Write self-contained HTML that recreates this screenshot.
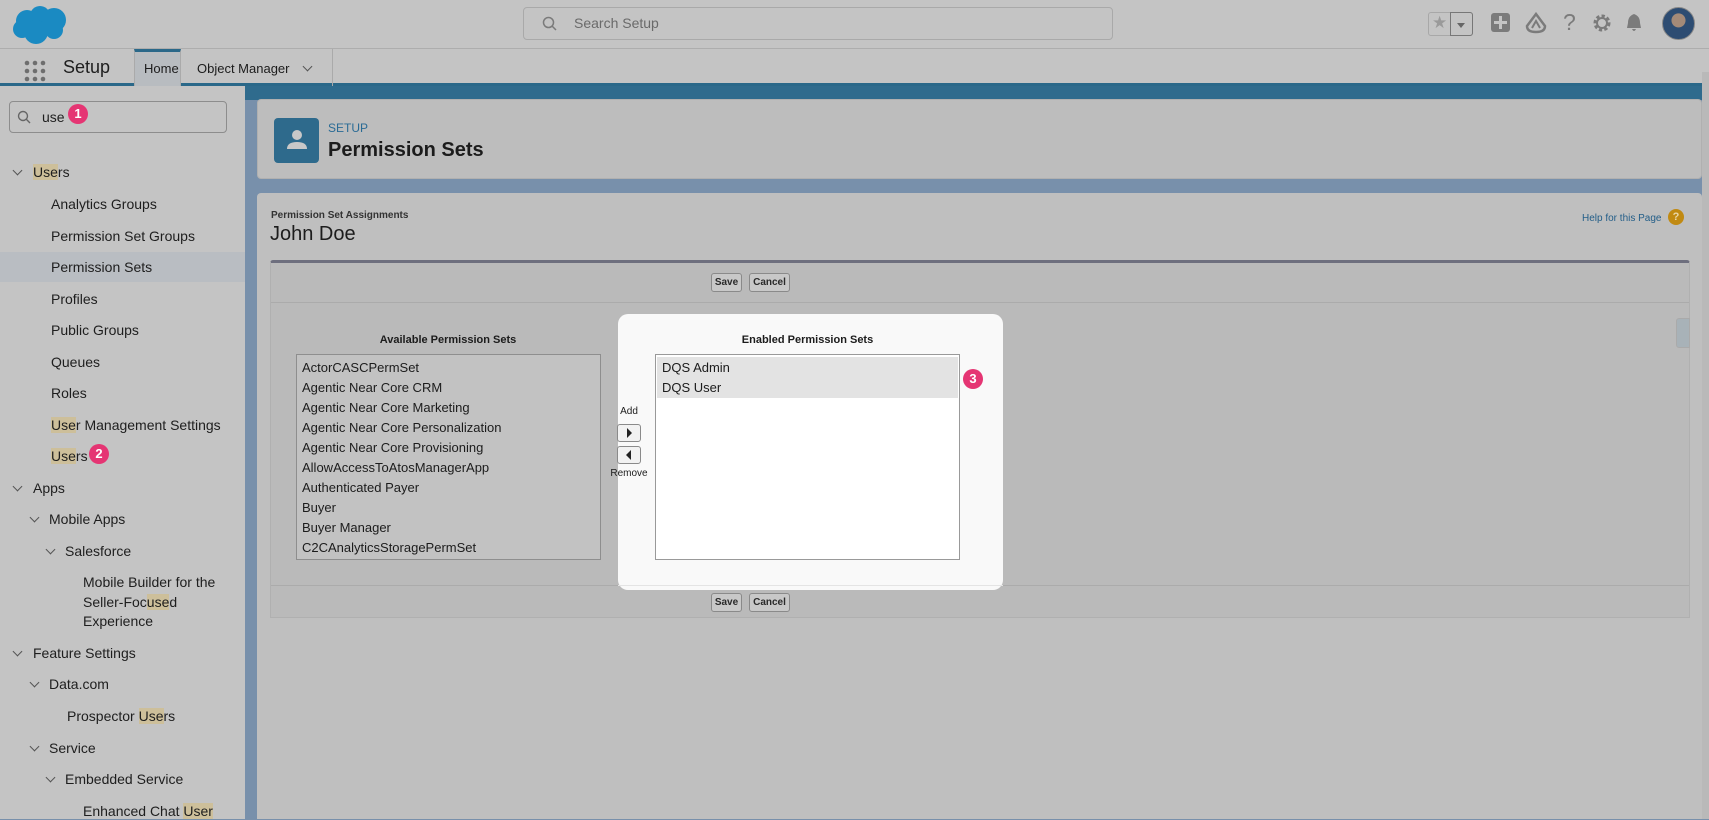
<!DOCTYPE html>
<html><head><meta charset="utf-8">
<style>
*{margin:0;padding:0;box-sizing:border-box}
body{width:1709px;height:819px;overflow:hidden;position:relative;background:#7890ab;font-family:"Liberation Sans",Arial,sans-serif;color:#1c1c1c}
.a{position:absolute}
.top{left:0;top:0;width:1709px;height:49px;background:#c4c4c4;border-bottom:1px solid #adadad}
.nav{left:0;top:49px;width:1709px;height:37px;background:#c4c4c4;border-bottom:3px solid #2a6889}
.band{left:245px;top:86px;width:1464px;height:14px;background:#2f6b8d}
.side{left:0;top:86px;width:245px;height:733px;background:#c4c4c4}
.si{position:absolute;font-size:14px;white-space:nowrap;line-height:18px;color:#1e1e1e}
.chev{position:absolute;width:7px;height:7px;border-right:1.3px solid #555;border-bottom:1.3px solid #555;transform:rotate(45deg)}
.hl{background:#cdbf9a}
.badge{position:absolute;width:20px;height:20px;border-radius:50%;background:#e53573;color:#fff;font-size:13px;font-weight:bold;text-align:center;line-height:20px}
.btn{position:absolute;height:19px;border:1px solid #8a8a8a;border-radius:3px;background:#c8c8c8;font-size:10px;font-weight:bold;line-height:17px;text-align:center;color:#2a2a2a}
.li{font-size:13px;line-height:20px;padding-left:5px;white-space:nowrap}
</style></head><body>
<div class="a top"></div>
<svg class="a" style="left:10px;top:3px" width="60" height="42" viewBox="0 0 60 42"><g fill="#1a8ac2"><circle cx="17" cy="18" r="11"/><circle cx="30" cy="13" r="10"/><circle cx="44" cy="17" r="12"/><circle cx="26" cy="29" r="12"/><circle cx="12" cy="26" r="9"/><circle cx="44" cy="27" r="9"/></g></svg>
<div class="a" style="left:523px;top:7px;width:590px;height:33px;border:1px solid #a9a9a9;border-radius:4px;background:#c4c4c4"></div>
<svg class="a" style="left:542px;top:16px" width="16" height="16"><circle cx="6.5" cy="6.5" r="5" fill="none" stroke="#7a7a7a" stroke-width="1.5"/><line x1="10" y1="10" x2="14" y2="14" stroke="#7a7a7a" stroke-width="1.5"/></svg>
<div class="a" style="left:574px;top:15px;font-size:14px;color:#6a6a6a">Search Setup</div>
<div class="a" style="left:1428px;top:12px;width:45px;height:24px;border:1px solid #a8a8a8;border-radius:3px"></div>
<div class="a" style="left:1450px;top:12px;width:23px;height:24px;border:1px solid #777;border-radius:0 3px 3px 0"></div>
<div class="a" style="left:1432px;top:13px;font-size:17px;color:#9a9a9a">★</div>
<div class="a" style="left:1457px;top:23px;border-left:4px solid transparent;border-right:4px solid transparent;border-top:5px solid #666"></div>
<div class="a" style="left:1491px;top:13px;width:19px;height:19px;background:#7b7b7b;border-radius:3px"></div>
<div class="a" style="left:1499px;top:16px;width:3px;height:13px;background:#c4c4c4"></div>
<div class="a" style="left:1494px;top:21px;width:13px;height:3px;background:#c4c4c4"></div>
<svg class="a" style="left:1525px;top:12px" width="22" height="22"><path d="M11 2 L20 14 Q20 20 11 20 Q2 20 2 14 Z" fill="none" stroke="#7b7b7b" stroke-width="2.5"/><path d="M7 16 L11 9 L15 16" fill="none" stroke="#7b7b7b" stroke-width="2"/></svg>
<div class="a" style="left:1563px;top:9px;font-size:23px;color:#7b7b7b">?</div>
<svg class="a" style="left:1592px;top:13px" width="20" height="20"><circle cx="10" cy="10" r="6.5" fill="none" stroke="#7b7b7b" stroke-width="4" stroke-dasharray="3 2"/><circle cx="10" cy="10" r="5" fill="none" stroke="#7b7b7b" stroke-width="2"/></svg>
<svg class="a" style="left:1624px;top:13px" width="20" height="20"><path d="M10 1 Q4 3 4 10 L3 15 L17 15 L16 10 Q16 3 10 1Z M8 16 Q10 20 12 16Z" fill="#7b7b7b"/></svg>
<div class="a" style="left:1662px;top:7px;width:33px;height:33px;border-radius:50%;background:radial-gradient(circle at 50% 40%,#a48a78 0 28%,#2d4c72 30% 100%);border:1px solid #888"></div>
<div class="a nav"></div>
<svg class="a" style="left:24px;top:60px" width="22" height="22"><g fill="#6e6e6e"><circle cx="3" cy="3" r="2.3"/><circle cx="11" cy="3" r="2.3"/><circle cx="19" cy="3" r="2.3"/><circle cx="3" cy="11" r="2.3"/><circle cx="11" cy="11" r="2.3"/><circle cx="19" cy="11" r="2.3"/><circle cx="3" cy="19" r="2.3"/><circle cx="11" cy="19" r="2.3"/><circle cx="19" cy="19" r="2.3"/></g></svg>
<div class="a" style="left:63px;top:57px;font-size:18px;color:#1e1e1e">Setup</div>
<div class="a" style="left:134px;top:49px;width:47px;height:37px;background:#b8bcc0;border-top:3px solid #2a6889;border-left:1px solid #aaa;border-right:1px solid #aaa"></div>
<div class="a" style="left:144px;top:61px;font-size:13px">Home</div>
<div class="a" style="left:197px;top:61px;font-size:13px">Object Manager</div>
<div class="chev" style="left:304px;top:63px"></div>
<div class="a" style="left:332px;top:49px;width:1px;height:37px;background:#aaa"></div>
<div class="a band"></div>
<div class="a" style="left:1702px;top:72px;width:7px;height:747px;background:#b9b9b9"></div>
<div class="a side"></div>
<div class="a" style="left:9px;top:101px;width:218px;height:32px;border:1px solid #8d8d8d;border-radius:4px"></div>
<svg class="a" style="left:17px;top:110px" width="15" height="15"><circle cx="6" cy="6" r="4.5" fill="none" stroke="#666" stroke-width="1.4"/><line x1="9.3" y1="9.3" x2="13" y2="13" stroke="#666" stroke-width="1.4"/></svg>
<div class="si" style="left:42px;top:108px">use</div>
<div class="badge" style="left:68px;top:104px">1</div>
<div class="a" style="left:0;top:252px;width:245px;height:30px;background:#b9bdc2"></div>
<div class="chev" style="left:14px;top:167px"></div><div class="si" style="left:33px;top:163px"><span class="hl">Use</span>rs</div>
<div class="si" style="left:51px;top:195px">Analytics Groups</div>
<div class="si" style="left:51px;top:227px">Permission Set Groups</div>
<div class="si" style="left:51px;top:258px">Permission Sets</div>
<div class="si" style="left:51px;top:290px">Profiles</div>
<div class="si" style="left:51px;top:321px">Public Groups</div>
<div class="si" style="left:51px;top:353px">Queues</div>
<div class="si" style="left:51px;top:384px">Roles</div>
<div class="si" style="left:51px;top:416px"><span class="hl">Use</span>r Management Settings</div>
<div class="si" style="left:51px;top:447px"><span class="hl">Use</span>rs</div>
<div class="badge" style="left:89px;top:444px">2</div>
<div class="chev" style="left:14px;top:483px"></div><div class="si" style="left:33px;top:479px">Apps</div>
<div class="chev" style="left:31px;top:514px"></div><div class="si" style="left:49px;top:510px">Mobile Apps</div>
<div class="chev" style="left:47px;top:546px"></div><div class="si" style="left:65px;top:542px">Salesforce</div>
<div class="si" style="left:83px;top:573px">Mobile Builder for the</div>
<div class="si" style="left:83px;top:593px">Seller-Foc<span class="hl">use</span>d</div>
<div class="si" style="left:83px;top:612px">Experience</div>
<div class="chev" style="left:14px;top:648px"></div><div class="si" style="left:33px;top:644px">Feature Settings</div>
<div class="chev" style="left:31px;top:679px"></div><div class="si" style="left:49px;top:675px">Data.com</div>
<div class="si" style="left:67px;top:707px">Prospector <span class="hl">Use</span>rs</div>
<div class="chev" style="left:31px;top:743px"></div><div class="si" style="left:49px;top:739px">Service</div>
<div class="chev" style="left:47px;top:774px"></div><div class="si" style="left:65px;top:770px">Embedded Service</div>
<div class="si" style="left:83px;top:802px">Enhanced Chat <span class="hl">User</span></div>
<div class="a" style="left:257px;top:99px;width:1445px;height:80px;background:#bdbdbd;border-radius:4px;border:1px solid #b0b0b0"></div>
<div class="a" style="left:274px;top:118px;width:45px;height:45px;background:#2e6a8c;border-radius:4px"></div>
<svg class="a" style="left:284px;top:127px" width="26" height="26"><circle cx="13" cy="8" r="5" fill="#c8c8c8"/><path d="M3 22 Q3 15 13 15 Q23 15 23 22Z" fill="#c8c8c8"/></svg>
<div class="a" style="left:328px;top:121px;font-size:12px;color:#2a6b95">SETUP</div>
<div class="a" style="left:328px;top:139px;font-size:20px;font-weight:bold">Permission Sets</div>
<div class="a" style="left:257px;top:193px;width:1445px;height:626px;background:#bfbfbf;border-radius:4px 4px 0 0"></div>
<div class="a" style="left:271px;top:210px;font-size:10px;font-weight:bold;color:#333">Permission Set Assignments</div>
<div class="a" style="left:270px;top:223px;font-size:20px">John Doe</div>
<div class="a" style="left:1582px;top:213px;font-size:10px;color:#235e88">Help for this Page</div>
<div class="a" style="left:1668px;top:209px;width:16px;height:16px;border-radius:50%;background:#c18a12;color:#e8d6a8;font-size:11px;font-weight:bold;text-align:center;line-height:16px">?</div>
<div class="a" style="left:270px;top:260px;width:1420px;height:358px;background:#bababa;border-top:3px solid #6e6f7e;border-left:1px solid #b0b0b0;border-right:1px solid #b0b0b0;border-bottom:1px solid #b0b0b0;border-radius:3px 3px 0 0"></div>
<div class="a" style="left:271px;top:302px;width:1418px;height:1px;background:#ababab"></div>
<div class="a" style="left:271px;top:585px;width:1418px;height:1px;background:#ababab"></div>
<div class="btn" style="left:711px;top:273px;width:31px">Save</div>
<div class="btn" style="left:749px;top:273px;width:41px">Cancel</div>
<div class="btn" style="left:711px;top:593px;width:31px">Save</div>
<div class="btn" style="left:749px;top:593px;width:41px">Cancel</div>
<div class="a" style="left:1676px;top:318px;width:14px;height:30px;background:#a8b2b8;border:1px solid #aaa;border-radius:3px 0 0 3px"></div>
<div class="a" style="left:296px;top:334px;width:304px;text-align:center;font-size:11px;font-weight:bold">Available Permission Sets</div>
<div class="a" style="left:296px;top:354px;width:305px;height:206px;border:1px solid #8e8e8e;background:#c2c2c2;padding-top:3px">
<div class="li">ActorCASCPermSet</div><div class="li">Agentic Near Core CRM</div><div class="li">Agentic Near Core Marketing</div><div class="li">Agentic Near Core Personalization</div><div class="li">Agentic Near Core Provisioning</div><div class="li">AllowAccessToAtosManagerApp</div><div class="li">Authenticated Payer</div><div class="li">Buyer</div><div class="li">Buyer Manager</div><div class="li">C2CAnalyticsStoragePermSet</div></div>
<div class="a" style="left:618px;top:314px;width:385px;height:276px;background:#f9f9f9;border-radius:10px"></div>
<div class="a" style="left:618px;top:585px;width:385px;height:1px;background:#e4e4e4"></div>
<div class="a" style="left:605px;top:406px;width:48px;text-align:center;font-size:10px">Add</div>
<div class="btn" style="left:617px;top:424px;width:24px;height:18px;background:#f2f2f2"></div>
<div class="a" style="left:627px;top:428px;border-top:5px solid transparent;border-bottom:5px solid transparent;border-left:5px solid #222"></div>
<div class="btn" style="left:617px;top:446px;width:24px;height:18px;background:#f2f2f2"></div>
<div class="a" style="left:626px;top:450px;border-top:5px solid transparent;border-bottom:5px solid transparent;border-right:5px solid #222"></div>
<div class="a" style="left:605px;top:468px;width:48px;text-align:center;font-size:10px">Remove</div>
<div class="a" style="left:655px;top:334px;width:305px;text-align:center;font-size:11px;font-weight:bold">Enabled Permission Sets</div>
<div class="a" style="left:655px;top:354px;width:305px;height:206px;border:1px solid #999;background:#fff;padding:2px 1px">
<div style="background:#e3e3e3;padding-top:1px"><div class="li">DQS Admin</div><div class="li">DQS User</div></div></div>
<div class="badge" style="left:963px;top:369px">3</div>
</body></html>
